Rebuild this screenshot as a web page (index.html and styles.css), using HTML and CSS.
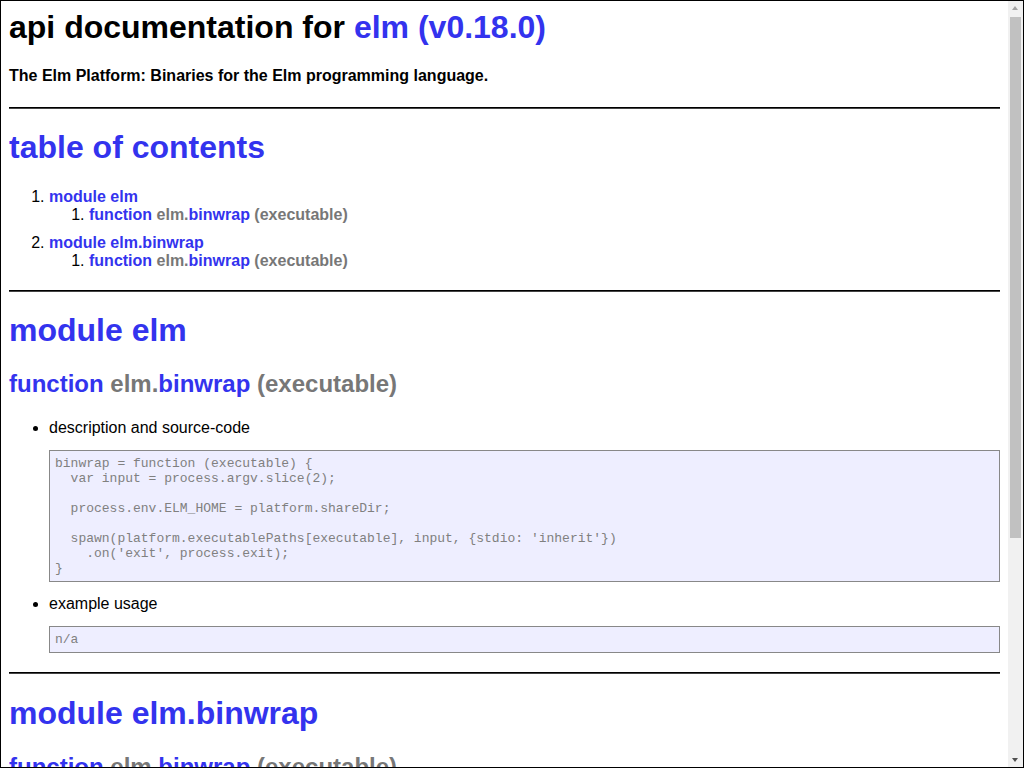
FILE: index.html
```html
<!DOCTYPE html>
<html>
<head>
<meta charset="utf-8">
<title>api documentation for elm</title>
<link rel="stylesheet" href="styles.css">
</head>
<body>
<div class="frame">
  <div class="page">
    <h1 class="title">api documentation for <span class="blue">elm (v0.18.0)</span></h1>
    <h4 class="subtitle">The Elm Platform: Binaries for the Elm programming language.</h4>
    <hr>
    <h1 class="blue">table of contents</h1>
    <ol class="toc">
      <li><span class="blue">module elm</span>
        <ol class="sub">
          <li><span class="blue">function</span> <span class="gray">elm.</span><span class="blue">binwrap</span> <span class="gray">(executable)</span></li>
        </ol>
      </li>
      <li><span class="blue">module elm.binwrap</span>
        <ol class="sub">
          <li><span class="blue">function</span> <span class="gray">elm.</span><span class="blue">binwrap</span> <span class="gray">(executable)</span></li>
        </ol>
      </li>
    </ol>
    <hr>
    <h1 class="blue">module elm</h1>
    <h2><span class="blue">function</span> <span class="gray">elm.</span><span class="blue">binwrap</span> <span class="gray">(executable)</span></h2>
    <ul class="details">
      <li>description and source-code
<pre class="code">binwrap = function (executable) {
  var input = process.argv.slice(2);

  process.env.ELM_HOME = platform.shareDir;

  spawn(platform.executablePaths[executable], input, {stdio: 'inherit'})
    .on('exit', process.exit);
}</pre>
      </li>
      <li>example usage
<pre class="code">n/a</pre>
      </li>
    </ul>
    <hr>
    <h1 class="blue after-hr">module elm.binwrap</h1>
    <h2><span class="blue">function</span> <span class="gray">elm.</span><span class="blue">binwrap</span> <span class="gray">(executable)</span></h2>
  </div>
  <div class="scrollbar">
    <div class="arrow up"></div>
    <div class="track"><div class="thumb"></div></div>
    <div class="arrow down"></div>
  </div>
</div>
</body>
</html>
```
FILE: styles.css
```css
html, body {
  margin: 0;
  padding: 0;
  overflow: hidden;
  background: #fff;
}
.frame {
  width: 1024px;
  height: 768px;
  box-sizing: border-box;
  border: 1px solid #000;
  display: flex;
  overflow: hidden;
  font-family: "Liberation Sans", Arial, sans-serif;
  color: #000;
}
.page {
  flex: 1;
  min-width: 0;
  padding: 8px 8px 0 8px;
  overflow: hidden;
}
.blue { color: #3333ee; }
.gray { color: #777; }
h1 {
  font-size: 32px;
  font-weight: bold;
  margin: 20px 0 21px 0;
  line-height: 37px;
}
h1.title { margin-top: 0; }
h1.after-hr { margin-top: 21px; }
h2 {
  font-size: 24px;
  font-weight: bold;
  margin: 20px 0 21px 0;
  line-height: 28px;
}
h4.subtitle {
  font-size: 16px;
  font-weight: bold;
  margin: 21px 0 22px 0;
  line-height: 18px;
}
hr {
  border: 0;
  border-top: 1px solid #000;
  border-bottom: 1px solid #444;
  height: 0;
  margin: 8px 0;
}
ol, ul {
  padding-left: 40px;
  margin: 16px 0;
  font-size: 16px;
  line-height: 18px;
}
.toc {
  font-weight: normal;
  margin-top: 22px;
  margin-bottom: 20px;
}
.toc > li { margin-bottom: 10px; }
.toc > li:last-child { margin-bottom: 0; }
.toc .sub {
  margin: 0;
}
.toc .blue, .toc .gray { font-weight: bold; }
.details { margin-bottom: 19px; }
.code {
  font-family: "Liberation Mono", "DejaVu Sans Mono", monospace;
  font-size: 13px;
  line-height: normal;
  color: #808080;
  background: #eeeeff;
  border: 1px solid #888;
  padding: 5px;
  margin: 13px 0;
  white-space: pre;
}
.scrollbar {
  width: 15px;
  flex: none;
  background: #f1f1f1;
  display: flex;
  flex-direction: column;
}
.arrow {
  height: 15px;
  flex: none;
  position: relative;
}
.arrow::after {
  content: "";
  position: absolute;
  left: 4px;
  width: 0;
  height: 0;
  border-left: 3.5px solid transparent;
  border-right: 3.5px solid transparent;
}
.arrow.up::after {
  top: 5px;
  border-bottom: 4px solid #a3a3a3;
}
.arrow.down::after {
  top: 6px;
  border-top: 4px solid #505050;
}
.track {
  flex: 1;
  padding: 1px 2px 0 2px;
}
.thumb {
  height: 521px;
  background: #c1c1c1;
}
```
